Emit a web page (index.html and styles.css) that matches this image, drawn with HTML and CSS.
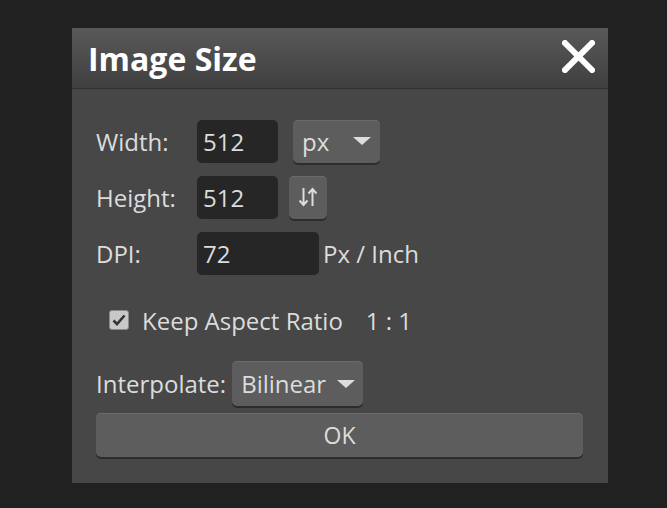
FILE: index.html
```html
<!DOCTYPE html>
<html>
<head>
<meta charset="utf-8">
<link rel="stylesheet" href="styles.css">
</head>
<body>
<div class="dialog">
  <div class="header">
    <span class="title">Image Size</span>
    <svg class="close" width="33" height="33" viewBox="0 0 33 33"><path d="M3 3 L30 30 M30 3 L3 30" stroke="#fff" stroke-width="6" stroke-linecap="square"/></svg>
  </div>
  <div class="content">
    <div class="row">
      <span class="label">Width:</span>
      <span class="input">512</span>
      <span class="btn select px">px<svg class="tri" width="18" height="8" viewBox="0 0 18 8"><path d="M0 0 H18 L9 8 Z" fill="#ddd"/></svg></span>
    </div>
    <div class="row">
      <span class="label">Height:</span>
      <span class="input">512</span>
      <span class="btn swap"><svg width="18" height="20" viewBox="0 0 18 20"><path d="M4.5 1 V18 M0.5 13.5 L4.5 18 L8.5 13.5 M13.5 19 V2 M9.5 6.5 L13.5 2 L17.5 6.5" stroke="#ddd" stroke-width="2" fill="none"/></svg></span>
    </div>
    <div class="row">
      <span class="label">DPI:</span>
      <span class="input wide">72</span>
      <span class="unit">Px / Inch</span>
    </div>
    <div class="check-row">
      <span class="checkbox"><svg width="14" height="12" viewBox="0 0 14 12"><path d="M1.5 6.5 L5 10 L12.5 1.5" stroke="#333" stroke-width="2.6" fill="none"/></svg></span>
      <span class="check-label">Keep Aspect Ratio</span>
      <span class="ratio">1 : 1</span>
    </div>
    <div class="row interp">
      <span class="label-inline">Interpolate:</span>
      <span class="btn select bil">Bilinear<svg class="tri" width="18" height="8" viewBox="0 0 18 8"><path d="M0 0 H18 L9 8 Z" fill="#ddd"/></svg></span>
    </div>
    <div class="btn ok">OK</div>
  </div>
</div>
</body>
</html>
```
FILE: styles.css
```css
html, body {
  margin: 0;
  padding: 0;
  background: #212121;
  width: 667px;
  height: 508px;
  overflow: hidden;
}
body {
  font-family: "Open Sans", "DejaVu Sans", sans-serif;
  color: #dcdcdc;
  padding-top: 28px;
  box-sizing: border-box;
}
.dialog {
  margin-left: 72px;
  width: 536px;
  height: 455px;
  background: #474747;
}
.header {
  height: 61px;
  box-sizing: border-box;
  border-bottom: 1px solid #303030;
  background: linear-gradient(#595959, #3f3f3f);
  display: flex;
  align-items: center;
  justify-content: space-between;
  padding: 0 13px 0 16px;
}
.title {
  font-weight: bold;
  font-size: 32px;
  color: #fff;
  line-height: 1;
  margin-top: 2px;
}
.close {
  display: block;
  margin-top: -4px;
}
.content {
  padding: 30px 25px 0 24px;
}
.row {
  display: flex;
  align-items: center;
  height: 44px;
  margin-bottom: 12px;
  font-size: 24px;
}
.label {
  width: 101px;
}
.input {
  width: 81px;
  height: 43px;
  box-sizing: border-box;
  background: #262626;
  border-radius: 5px;
  padding-left: 6px;
  display: flex;
  align-items: center;
}
.input.wide {
  width: 122px;
}
.unit {
  margin-left: 4px;
}
.btn {
  background: #5d5d5d;
  border-radius: 5px;
  box-shadow: inset 0 1px 0 #6a6a6a, 0 2px 0 #2c2c2c;
  box-sizing: border-box;
  display: flex;
  align-items: center;
}
.select.px {
  margin-left: 15px;
  width: 87px;
  height: 43px;
  padding-left: 9px;
  justify-content: space-between;
  padding-right: 9px;
}
.swap {
  margin-left: 11px;
  width: 38px;
  height: 43px;
  justify-content: center;
}
.check-row {
  display: flex;
  align-items: center;
  height: 30px;
  margin-top: 30px;
  font-size: 24px;
  padding-left: 13px;
}
.checkbox {
  width: 20px;
  height: 20px;
  box-sizing: border-box;
  background: #c8c8c8;
  border: 1px solid #8a8a8a;
  border-radius: 3px;
  display: flex;
  align-items: center;
  justify-content: center;
}
.check-label {
  margin-left: 13px;
}
.ratio {
  margin-left: 23px;
}
.row.interp {
  margin-top: 26px;
  margin-bottom: 7px;
  height: 45px;
}
.label-inline {
  margin-right: 6px;
}
.select.bil {
  width: 131px;
  height: 45px;
  padding-left: 9px;
  padding-right: 8px;
  justify-content: space-between;
}
.ok {
  height: 44px;
  width: 487px;
  justify-content: center;
  font-size: 23px;
}
```
